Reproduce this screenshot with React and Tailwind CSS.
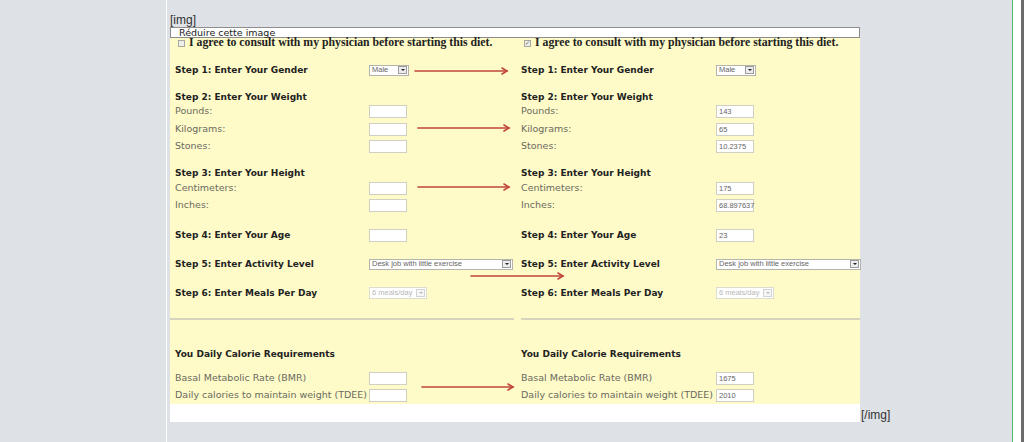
const RED = '#c0463b';

function Box({ value, w = 'w-[38px]' }) {
  return (
    <div className={`h-[13px] shrink-0 border border-[#cfcfc4] bg-white pl-[2px] font-['Liberation_Sans',sans-serif] text-[7.5px] leading-[11px] text-[#666] ${w}`}>
      {value}
    </div>
  );
}

function Select({ w, h = 'h-[11px]', text, disabled }) {
  return (
    <div
      className={`flex shrink-0 items-center border bg-white font-['Liberation_Sans',sans-serif] ${w} ${h} ${
        disabled ? 'border-[#dcdcd2] text-[#b8b8b8]' : 'border-[#b4b4ac] text-[#666]'
      }`}
    >
      <span className="flex-1 truncate pl-[2px] text-[7.5px] leading-none">{text}</span>
      <span
        className={`mr-px flex h-[8px] w-[9px] items-center justify-center border ${
          disabled ? 'border-[#d4d4d4] bg-[#f6f6f6]' : 'border-[#9c9c9c] bg-[#ececec]'
        }`}
      >
        <span
          className={`h-0 w-0 border-x-[2px] border-t-[2px] border-x-transparent ${
            disabled ? 'border-t-[#bbb]' : 'border-t-[#222]'
          }`}
        />
      </span>
    </div>
  );
}

function Row({ mt, label, bold, children, lw }) {
  return (
    <div className={`flex h-[14px] items-center ${mt}`}>
      <div
        className={`shrink-0 whitespace-nowrap font-['DejaVu_Sans',sans-serif] leading-none ${lw} ${
          bold ? 'text-[9px] font-bold text-[#222]' : 'text-[9.5px] text-[#6a6a5e]'
        }`}
      >
        {label}
      </div>
      {children}
    </div>
  );
}

function Column({ v, checked, colClass, lw, hrClass, selW }) {
  return (
    <div className={`flex flex-col ${colClass}`}>
      <div className="flex h-[10px] items-center">
        <span className="ml-[3px] flex h-[7px] w-[7px] items-center justify-center border border-[#a8a8a0] bg-[#eeeee8] text-[6px] leading-none text-[#666]">
          {checked ? '✓' : ''}
        </span>
        <span className="ml-[4px] whitespace-nowrap font-['Liberation_Serif',serif] text-[11.75px] font-bold leading-none text-[#222]">
          I agree to consult with my physician before starting this diet.
        </span>
      </div>
      <Row mt="mt-[15px]" label="Step 1: Enter Your Gender" bold lw={lw}>
        <Select w="w-[40px]" text="Male" />
      </Row>
      <Row mt="mt-[13px]" label="Step 2: Enter Your Weight" bold lw={lw} />
      <Row mt="mt-0" label="Pounds:" lw={lw}>
        <Box value={v.lb} />
      </Row>
      <Row mt="mt-[4px]" label="Kilograms:" lw={lw}>
        <Box value={v.kg} />
      </Row>
      <Row mt="mt-[3px]" label="Stones:" lw={lw}>
        <Box value={v.st} />
      </Row>
      <Row mt="mt-[13px]" label="Step 3: Enter Your Height" bold lw={lw} />
      <Row mt="mt-px" label="Centimeters:" lw={lw}>
        <Box value={v.cm} />
      </Row>
      <Row mt="mt-[3px]" label="Inches:" lw={lw}>
        <Box value={v.in} />
      </Row>
      <Row mt="mt-[16px]" label="Step 4: Enter Your Age" bold lw={lw}>
        <Box value={v.age} />
      </Row>
      <Row mt="mt-[15px]" label="Step 5: Enter Activity Level" bold lw={lw}>
        <Select w={selW} text="Desk job with little exercise" />
      </Row>
      <Row mt="mt-[15px]" label="Step 6: Enter Meals Per Day" bold lw={lw}>
        <Select w="w-[58px]" h="h-[12px]" text="6 meals/day" disabled />
      </Row>
      <div className={`mt-[18px] h-[2px] bg-[#d6d4bc] ${hrClass}`} />
      <Row mt="mt-[27px]" label="You Daily Calorie Requirements" bold lw={lw} />
      <Row mt="mt-[10px]" label="Basal Metabolic Rate (BMR)" lw={lw}>
        <Box value={v.bmr} />
      </Row>
      <Row mt="mt-[3px]" label="Daily calories to maintain weight (TDEE)" lw={lw}>
        <Box value={v.tdee} />
      </Row>
    </div>
  );
}

const ARROWS = [
  [245, 337, 33],
  [248, 339, 90],
  [248, 339, 149],
  [301, 393, 238],
  [252, 343, 349],
];

function Arrows() {
  return (
    <svg className="pointer-events-none absolute left-0 top-0" width="690" height="367">
      {ARROWS.map(([x1, x2, y], i) => (
        <g key={i} stroke={RED} strokeWidth="1.6" fill="none" strokeLinecap="round">
          <line x1={x1} y1={y} x2={x2} y2={y} />
          <polyline points={`${x2 - 5},${y - 3} ${x2},${y} ${x2 - 5},${y + 3}`} />
        </g>
      ))}
    </svg>
  );
}

function ImageBox() {
  return (
    <div className="flex w-[690px] flex-col">
      <div className="h-[11px] border border-[#8d8d8d] bg-white pl-[8px] font-['DejaVu_Sans',sans-serif] text-[9.5px] leading-[10px] text-[#222]">
        Réduire cette image
      </div>
      <div className="relative flex h-[366px] bg-[#fefbc9]">
        <Column
          v={{}}
          colClass="w-[351px] pl-[5px]"
          lw="w-[194px]"
          hrClass="-ml-[5px] w-[344px]"
          selW="w-[144px]"
        />
        <Column
          v={{ lb: '143', kg: '65', st: '10.2375', cm: '175', in: '68.897637', age: '23', bmr: '1675', tdee: '2010' }}
          checked
          colClass="w-[339px]"
          lw="w-[195px]"
          hrClass="w-[339px]"
          selW="w-[145px]"
        />
        <Arrows />
      </div>
      <div className="h-[18px] bg-white" />
    </div>
  );
}

export default function App() {
  return (
    <div className="flex h-[442px] w-[1024px] overflow-hidden bg-[#dee1e6] font-['Liberation_Sans',sans-serif]">
      <div className="w-[166px] shrink-0" />
      <div className="w-px shrink-0 bg-white" />
      <div className="flex-1 pl-[3px] pt-[13px]">
        <div className="text-[12px] leading-[14px] text-[#333]">[img]</div>
        <div className="flex items-end">
          <ImageBox />
          <span className="ml-px text-[12px] leading-[14px] text-[#333]">[/img]</span>
        </div>
      </div>
      <div className="w-px shrink-0 bg-[#4cbb6c]" />
      <div className="w-[8px] shrink-0 bg-white" />
      <div className="w-[3px] shrink-0 bg-[#6b6b6b]" />
    </div>
  );
}
